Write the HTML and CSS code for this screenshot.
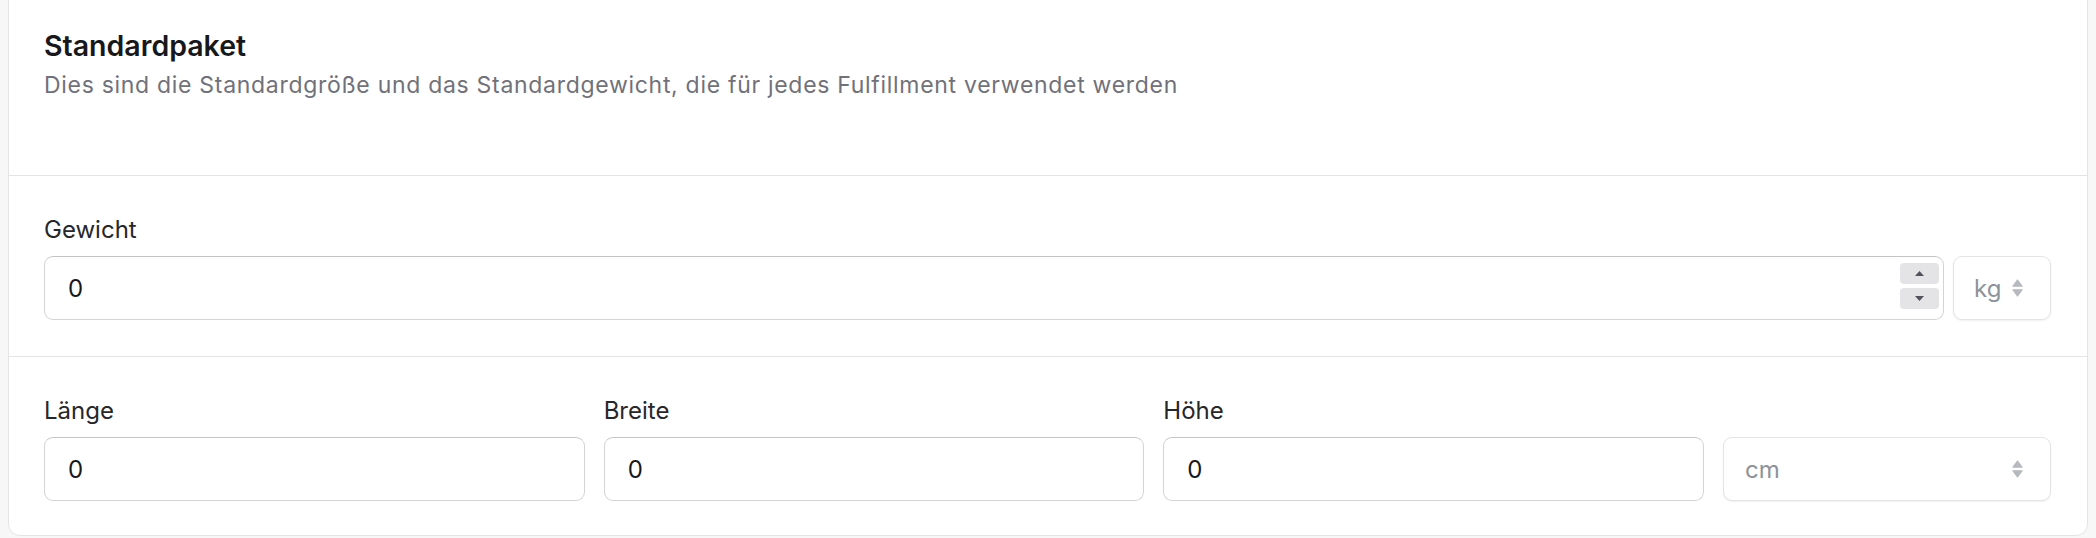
FILE: index.html
```html
<!DOCTYPE html>
<html lang="de">
<head>
<meta charset="utf-8">
<title>Standardpaket</title>
<link rel="stylesheet" href="styles.css">
</head>
<body>
<div class="card">
  <section class="section head">
    <h2 class="title">Standardpaket</h2>
    <p class="subtitle">Dies sind die Standardgröße und das Standardgewicht, die für jedes Fulfillment verwendet werden</p>
  </section>
  <section class="section">
    <label class="label">Gewicht</label>
    <div class="row-weight">
      <div class="num-wrap">
        <input class="field" type="text" value="0">
        <div class="spinner">
          <span class="spin-btn"><svg width="9" height="5" viewBox="0 0 9 5"><path d="M0 5 L4.5 0 L9 5 Z" fill="#52525b"/></svg></span>
          <span class="spin-btn"><svg width="9" height="5" viewBox="0 0 9 5"><path d="M0 0 L4.5 5 L9 0 Z" fill="#52525b"/></svg></span>
        </div>
      </div>
      <div class="select">
        <span class="select-text">kg</span>
        <svg class="chev" width="11" height="18" viewBox="0 0 11 18"><path d="M1 7.2 L5.5 1 L10 7.2 Z M1 10.8 L5.5 17 L10 10.8 Z" fill="#b6b9bf" stroke="#b6b9bf" stroke-width="1.2" stroke-linejoin="round"/></svg>
      </div>
    </div>
  </section>
  <section class="section">
    <div class="row-dims">
      <div class="col">
        <label class="label">Länge</label>
        <input class="field" type="text" value="0">
      </div>
      <div class="col">
        <label class="label">Breite</label>
        <input class="field" type="text" value="0">
      </div>
      <div class="col">
        <label class="label">Höhe</label>
        <input class="field" type="text" value="0">
      </div>
      <div class="col col-end">
        <div class="select wide">
          <span class="select-text">cm</span>
          <svg class="chev" width="11" height="18" viewBox="0 0 11 18"><path d="M1 7.2 L5.5 1 L10 7.2 Z M1 10.8 L5.5 17 L10 10.8 Z" fill="#b6b9bf" stroke="#b6b9bf" stroke-width="1.2" stroke-linejoin="round"/></svg>
        </div>
      </div>
    </div>
  </section>
</div>
</body>
</html>
```
FILE: styles.css
```css
html, body {
  background: #f7f7f8;
}
body {
  margin: 0 8px;
  font-family: Inter, "Noto Sans", sans-serif;
  color: #18181b;
}
.card {
  margin-top: -9px;
  background: #ffffff;
  border: 1px solid #e4e4e7;
  border-radius: 0 0 12px 12px;
  height: 545px;
  box-sizing: border-box;
}
.section {
  padding: 36px 36px 36px 35px;
  border-bottom: 1px solid #e4e4e7;
}
.section:last-child {
  border-bottom: none;
}
.head {
  padding-bottom: 74px;
}
.title {
  margin: 0;
  font-size: 28.5px;
  line-height: 36px;
  font-weight: 600;
  color: #18181b;
}
.subtitle {
  margin: 5px 0 0;
  font-size: 23px;
  line-height: 32px;
  letter-spacing: 0.7px;
  color: #71717a;
}
.label {
  display: block;
  font-size: 24px;
  line-height: 36px;
  color: #27272a;
  margin-bottom: 8px;
}
.row-weight {
  display: flex;
  gap: 9px;
}
.num-wrap {
  position: relative;
  flex: 1;
}
.field {
  display: block;
  width: 100%;
  box-sizing: border-box;
  height: 64px;
  border: 1px solid #d4d4d8;
  border-top-color: #c4c4c8;
  border-radius: 9px;
  padding: 0 23px;
  font-family: Inter, "Noto Sans", sans-serif;
  font-size: 24px;
  color: #18181b;
  background: #ffffff;
  outline: none;
}
.spinner {
  position: absolute;
  right: 5px;
  top: 7px;
  display: flex;
  flex-direction: column;
  gap: 4px;
}
.spin-btn {
  width: 39px;
  height: 21px;
  border-radius: 4px;
  background: #e4e4e7;
  display: flex;
  align-items: center;
  justify-content: center;
}
.select {
  width: 98px;
  height: 64px;
  box-sizing: border-box;
  border: 1px solid #e4e4e7;
  border-radius: 9px;
  box-shadow: 0 1px 2px rgba(0, 0, 0, 0.06);
  display: flex;
  align-items: center;
  justify-content: space-between;
  padding: 0 27px 0 20px;
  background: #ffffff;
}
.select.wide {
  width: 100%;
  padding-left: 21px;
}
.select-text {
  font-size: 24px;
  color: #8e9299;
}
.chev {
  display: block;
}
.row-dims {
  display: grid;
  grid-template-columns: 1fr 1fr 1fr 328px;
  column-gap: 19px;
}
.col-end {
  display: flex;
  align-items: flex-end;
}
```
